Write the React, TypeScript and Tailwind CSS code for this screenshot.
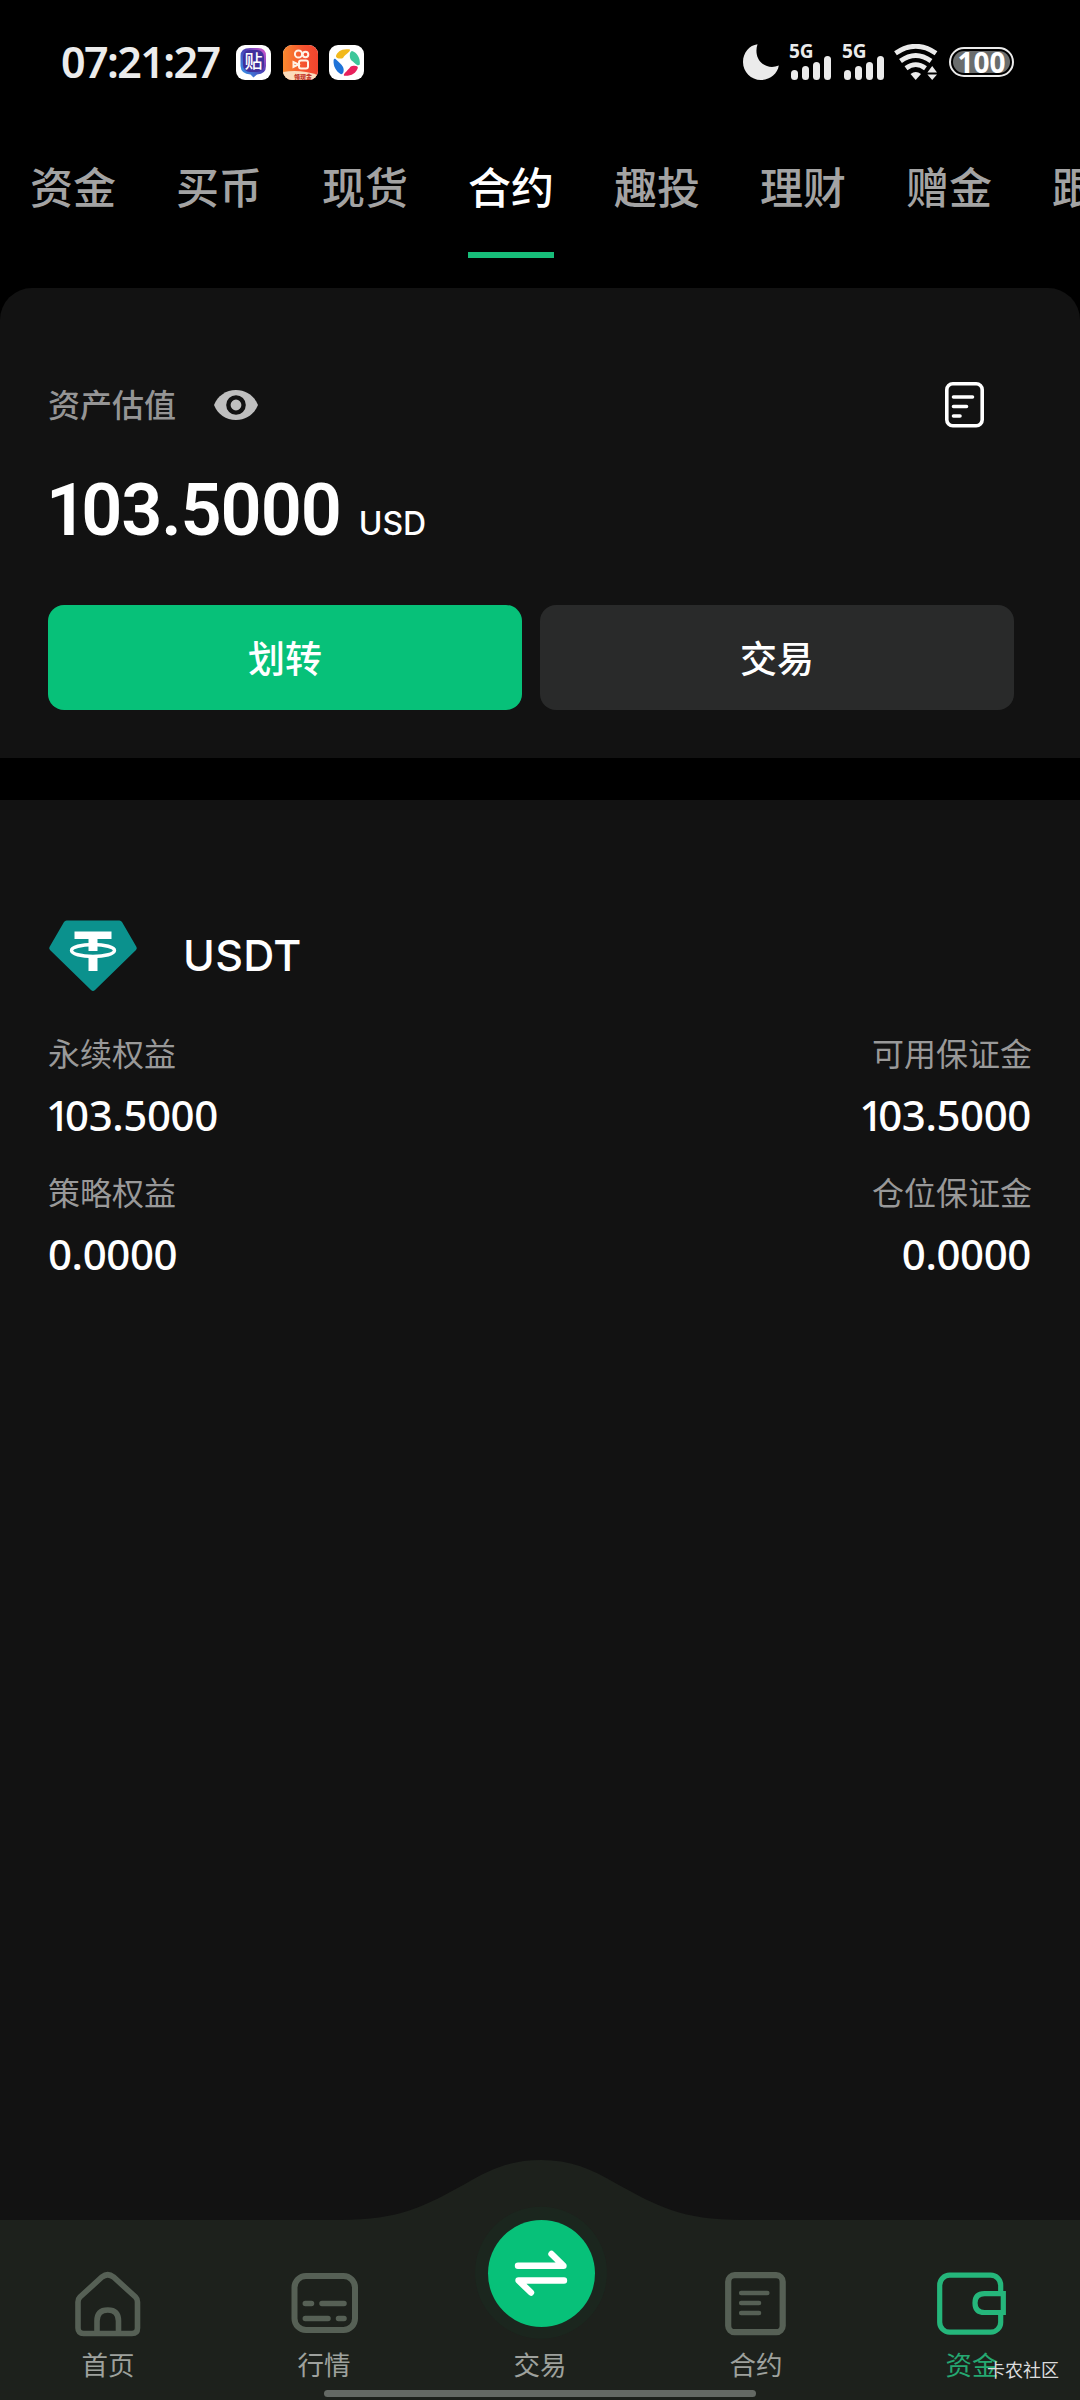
import type { ReactNode } from 'react';
import clsx from 'clsx';

const TABS = ['资金', '买币', '现货', '合约', '趣投', '理财', '赠金', '跟单'];

const BALANCES = [
  { label: '永续权益', value: '103.5000', rightLabel: '可用保证金', rightValue: '103.5000' },
  { label: '策略权益', value: '0.0000', rightLabel: '仓位保证金', rightValue: '0.0000' },
];

export default function App() {
  return (
    <div className="relative flex h-[2400px] w-[1080px] flex-col overflow-hidden bg-black font-['Noto_Sans_CJK_SC',sans-serif] text-white">
      <StatusBar />
      <Tabs active="合约" />
      <AssetSummary />
      <Holdings />
      <BottomNav />
      <span className="absolute top-[2356px] left-[987px] text-[18px] leading-[26px] text-[#dcdcdc]">卡农社区</span>
    </div>
  );
}

/* ── Status bar ── */
function StatusBar() {
  return (
    <header className="flex h-[124px] items-center justify-between pr-[66px] pl-[61px]">
      <div className="flex items-center">
        <span className="w-[175px] font-['Noto_Sans',sans-serif] text-[43px] leading-[60px] font-semibold tracking-[-1.6px] text-[#ececec]">
          07:21:27
        </span>
        <div className="flex gap-[11.5px]">
          <TiebaIcon />
          <KuaishouIcon />
          <PinwheelIcon />
        </div>
      </div>
      <div className="flex items-center">
        <svg className="h-9 w-9" viewBox="0 0 36 36" fill="#ebebeb">
          <path d="M14.5 0.2C12 8 14 15.5 19.5 19.8C24 23.2 30 23.8 35.8 21.6C34.5 30 27 36 18 36C8 36 0 28 0 18C0 8.5 6.5 1.2 14.5 0.2Z" />
        </svg>
        <Signal className="ml-2.5" />
        <Signal className="ml-[11px]" />
        <svg className="ml-[10px] h-9 w-[44px]" viewBox="0 0 44 36" fill="none" stroke="#ebebeb" strokeWidth="4.8">
          <path d="M1.5 9.2Q21.7 -4.7 42 9.2" />
          <path d="M6.5 17Q21.7 6 37 17" />
          <path d="M12 24.2Q21.7 17 31.5 24.2" />
          <path d="M16.5 30Q21.7 26.2 27 30L21.7 36Z" fill="#ebebeb" stroke="none" />
          <path d="M38.2 22L43 28.6H33.4ZM38.2 36L43 30.4H33.4Z" fill="#ebebeb" stroke="none" />
        </svg>
        <div className="ml-[11px] flex h-[30px] w-[65px] items-center justify-center rounded-full border-2 border-[#ebebeb] p-[2px]">
          <div className="flex h-full w-full items-center justify-center rounded-full bg-[#6a6d6d]">
            <span className="font-['Open_Sans',sans-serif] text-[28px] leading-none font-bold text-white">100</span>
          </div>
        </div>
      </div>
    </header>
  );
}

function Signal({ className }: { className?: string }) {
  return (
    <div className={clsx('flex h-9 w-[42px] flex-col', className)}>
      <span className="h-[11.5px] font-['Noto_Sans',sans-serif] text-[19px] leading-[14px] font-bold text-[#ebebeb]">5G</span>
      <div className="flex h-[24.5px] items-end gap-[4.5px] pl-[2px]">
        <i className="h-[10px] w-[6.5px] rounded-full bg-[#ebebeb]" />
        <i className="h-[14px] w-[6.5px] rounded-full bg-[#ebebeb]" />
        <i className="h-[18.5px] w-[6.5px] rounded-full bg-[#ebebeb]" />
        <i className="h-[24.5px] w-[6.5px] rounded-full bg-[#ebebeb]" />
      </div>
    </div>
  );
}

function TiebaIcon() {
  return (
    <div className="relative flex h-[35px] w-[35px] items-center justify-center overflow-hidden rounded-[9px] bg-white">
      <svg className="absolute inset-0 h-full w-full" viewBox="0 0 35 35">
        <defs>
          <linearGradient id="tieba" x1="1" y1="0" x2="0" y2="1">
            <stop offset="0" stopColor="#e05ad0" />
            <stop offset="0.45" stopColor="#4b3fb5" />
            <stop offset="1" stopColor="#35a6f0" />
          </linearGradient>
        </defs>
        <path d="M14 3H22Q30 3 30 11V21Q30 29 21 29.5L17.5 32.5L14.5 29.5Q5 29 4.5 21V11Q4.5 3 14 3Z" fill="url(#tieba)" />
        <rect x="7" y="5" width="21" height="22" rx="7" fill="#41309c" />
      </svg>
      <span className="relative -top-[2px] text-[18px] leading-none font-medium">贴</span>
    </div>
  );
}

function KuaishouIcon() {
  return (
    <div className="relative flex h-[35px] w-[35px] items-end justify-center overflow-hidden rounded-[9px] bg-white">
      <svg className="absolute inset-0 h-full w-full" viewBox="0 0 35 35" fill="none">
        <defs>
          <linearGradient id="kuaishou" x1="0" y1="0" x2="1" y2="0">
            <stop offset="0" stopColor="#f9892f" />
            <stop offset="0.6" stopColor="#f55230" />
            <stop offset="1" stopColor="#f0442e" />
          </linearGradient>
        </defs>
        <rect width="35" height="35" fill="url(#kuaishou)" />
        <path d="M0 27Q17 24 35 30L31 35H0Z" fill="#fbdcbb" />
        <g stroke="#fff2e6" strokeWidth="2">
          <circle cx="15.5" cy="9" r="3.6" />
          <circle cx="22.5" cy="9.5" r="2.8" />
          <rect x="16" y="15.5" width="9" height="8" rx="2" />
          <path d="M15.5 19.5L10.5 17V22Z" />
        </g>
      </svg>
      <span className="relative left-[3px] text-[6px] leading-[7px] font-black whitespace-nowrap text-[#c2362a]">领现金</span>
    </div>
  );
}

function PinwheelIcon() {
  return (
    <svg className="h-[35px] w-[35px]" viewBox="0 0 35 35">
      <rect width="35" height="35" rx="9" fill="#fff" />
      <path d="M7 11C8 7 13 3 21 4.6C21.5 7 17 8.5 14 13C12 14.2 6.5 13.5 7 11Z" fill="#f2b91c" />
      <path d="M23 6C28 7.5 31.5 13 30.8 19.5C28.5 22 26 18 22 15C20.2 12 20.5 6.5 23 6Z" fill="#3dc79a" />
      <path d="M28.8 23C27 28.5 22 31.3 15 30.8C14 28.8 18 26.5 21.5 21.8C24 20 29.5 20.5 28.8 23Z" fill="#e8215c" />
      <path d="M6.5 14C10 17 12.5 19.5 14 22C15.5 25 14.5 29.5 12 29.2C7 26.5 4 21 4.6 15C5 13.5 6 13.4 6.5 14Z" fill="#1e73d8" />
    </svg>
  );
}

/* ── Account tabs ── */
function Tabs({ active }: { active: string }) {
  return (
    <nav className="flex h-[164px] gap-[60px] overflow-hidden pt-[35px] pl-[30px]">
      {TABS.map((tab) => (
        <button
          key={tab}
          className={clsx(
            'flex h-[99px] w-[86px] shrink-0 items-start border-b-[6px] text-[43px] leading-[52px] font-medium whitespace-nowrap',
            tab === active ? 'border-[#17bd79] text-white' : 'border-transparent text-[#a3a3a3]',
          )}
        >
          {tab}
        </button>
      ))}
    </nav>
  );
}

/* ── Asset valuation ── */
function AssetSummary() {
  return (
    <section className="h-[470px] shrink-0 rounded-t-[32px] bg-[#121212] pt-[92px] pr-[66px] pl-12">
      <div className="flex h-[50px] items-center">
        <span className="mb-1 text-[32px] leading-[46px] font-medium text-[#959595]">资产估值</span>
        <svg className="ml-[38px] h-[30px] w-[44px]" viewBox="0 0 44 30">
          <path d="M22 0C32 0 40.5 6 44 15C40.5 24 32 30 22 30C12 30 3.5 24 0 15C3.5 6 12 0 22 0Z" fill="#bfbfbf" />
          <circle cx="22" cy="15" r="7.6" fill="#bfbfbf" stroke="#121212" strokeWidth="4.4" />
        </svg>
        <svg className="mr-[30px] ml-auto h-[46px] w-[39px]" viewBox="0 0 39 46" fill="none" stroke="#fff">
          <rect x="1.8" y="1.8" width="35.4" height="42" rx="6" strokeWidth="3.6" />
          <path d="M8.5 15H27.5M8.5 24.5H21.5M8.5 34H15" strokeWidth="3.6" strokeLinecap="round" />
        </svg>
      </div>
      <div className="mt-[34px] flex h-[92px] items-baseline">
        <span className="-ml-[2px] font-['Roboto',sans-serif] text-[72px] leading-[94px] font-semibold tracking-[-1.1px] first-letter:tracking-[-6px]">
          103.5000
        </span>
        <span className="ml-[18px] font-['Inter',sans-serif] text-[32px] font-medium">USD</span>
      </div>
      <div className="mt-[49px] flex gap-[18px]">
        <button className="h-[105px] flex-1 rounded-[16px] bg-[#07c179] text-[37px] font-medium">划转</button>
        <button className="h-[105px] flex-1 rounded-[16px] bg-[#292a2a] text-[37px] font-medium">交易</button>
      </div>
    </section>
  );
}

/* ── Holdings ── */
function Holdings() {
  return (
    <section className="mt-[42px] h-[1600px] shrink-0 bg-[#121212] pt-[120px] pr-12 pl-12">
      <div className="flex h-[72px] items-center">
        <svg className="h-[72px] w-[90px]" viewBox="0 0 90 72">
          <path d="M18.5 0.5H71.5Q73 0.5 74 2L88.5 27Q89.3 28.5 88 30L47 70Q45 72 43 70L2 30Q0.7 28.5 1.5 27L16 2Q17 0.5 18.5 0.5Z" fill="#0b918d" />
          <ellipse cx="45" cy="30.5" rx="21.5" ry="6" fill="none" stroke="#fff" strokeWidth="3.4" />
          <path d="M26.5 11.5H63.5V19H49.5V31H40.5V19H26.5Z" fill="#fff" />
          <path d="M40.5 36H49.5V51H40.5Z" fill="#fff" />
        </svg>
        <span className="mb-[2px] ml-[45px] font-['Inter',sans-serif] text-[43px] leading-[56px] font-medium tracking-[0.3px]">USDT</span>
      </div>
      <div className="mt-9">
        {BALANCES.map((row) => (
          <div key={row.label} className="flex h-[139px] justify-between">
            <Balance label={row.label} value={row.value} />
            <Balance label={row.rightLabel} value={row.rightValue} className="items-end" />
          </div>
        ))}
      </div>
    </section>
  );
}

function Balance({ label, value, className }: { label: string; value: string; className?: string }) {
  return (
    <div className={clsx('flex flex-col', className)}>
      <span className="text-[32px] leading-[48px] text-[#999999]">{label}</span>
      {/* tighten the wide tabular "1" */}
      <span
        className={clsx(
          "mt-[9px] mr-px font-['Noto_Sans',sans-serif] text-[42px] leading-[60px] font-medium tracking-[-0.4px]",
          value.startsWith('1') && '-ml-[2px] first-letter:tracking-[-5px]',
        )}
      >
        {value}
      </span>
    </div>
  );
}

/* ── Bottom navigation ── */
function BottomNav() {
  return (
    <nav className="absolute inset-x-0 bottom-0 h-60">
      <svg className="absolute inset-0 h-full w-full" viewBox="0 0 1080 240">
        <path
          d="M0 60H340C400 60 425 46 465 24C492 8 512 0 541 0C570 0 590 8 617 24C657 46 682 60 742 60H1080V240H0Z"
          fill="#1d211c"
        />
        <circle cx="541" cy="112.7" r="66" fill="#1b261e" />
      </svg>
      <div className="relative grid h-full grid-cols-5 items-end pb-5">
        <NavItem label="首页">
          <NavIcon>
            <path d="M30 9Q35.7 4.5 41.5 9L63.5 29Q65.5 31 65.5 34V60Q65.5 65.5 60 65.5H11.5Q6 65.5 6 60V34Q6 31 8 29Z" strokeWidth="5.6" />
            <path d="M25 64V53Q25 42 35.8 42Q46.5 42 46.5 53V64" strokeWidth="5.6" />
          </NavIcon>
        </NavItem>
        <NavItem label="行情">
          <NavIcon>
            <rect x="6.5" y="8" width="60.5" height="54" rx="11.5" strokeWidth="6" />
            <path d="M17.3 35.5H23.5M34 35.5H56M17.3 50.5H40M50.5 50.5H56" strokeWidth="5.5" strokeLinecap="round" />
          </NavIcon>
        </NavItem>
        <NavItem label="交易">
          <div className="mb-[13.5px] ml-[2px] flex h-[107px] w-[107px] items-center justify-center rounded-full bg-[#07c179]">
            <svg className="h-[46px] w-[54px]" viewBox="0 0 54 46" fill="none" stroke="#fff" strokeWidth="6.4" strokeLinecap="round" strokeLinejoin="round">
              <path d="M4 15.8H49.5L37.5 4" />
              <path d="M50 30.5H4.5L17 42.5" />
            </svg>
          </div>
        </NavItem>
        <NavItem label="合约">
          <NavIcon>
            <rect x="8.2" y="7.2" width="54.5" height="57" rx="6.5" strokeWidth="6.2" />
            <path d="M21.2 25H47.3M21.2 35H39M21.2 45H39" strokeWidth="4.6" strokeLinecap="round" />
          </NavIcon>
        </NavItem>
        <NavItem label="资金" active>
          <NavIcon active>
            <rect x="3.7" y="7.2" width="61" height="57" rx="10" strokeWidth="5.2" />
            <path d="M67.3 25.6H48.5Q39 25.6 39 35Q39 44.5 48.5 44.5H67.3Z" fill="#1d211c" strokeWidth="5.2" />
          </NavIcon>
        </NavItem>
      </div>
      {/* gesture bar */}
      <div className="absolute bottom-[3px] left-[324px] h-[7px] w-[432px] rounded-full bg-[#646964]" />
    </nav>
  );
}

function NavIcon({ active, children }: { active?: boolean; children: ReactNode }) {
  return (
    <svg className="h-[72px] w-[72px]" viewBox="0 0 72 72" fill="none" stroke={active ? '#25b67b' : '#566055'}>
      {children}
    </svg>
  );
}

function NavItem({ label, active, children }: { label: string; active?: boolean; children: ReactNode }) {
  return (
    <button className="flex flex-col items-center gap-2">
      {children}
      <span className={clsx('text-[26.5px] leading-[32px]', active ? 'text-[#25a871]' : 'text-[#9ea19d]')}>{label}</span>
    </button>
  );
}
